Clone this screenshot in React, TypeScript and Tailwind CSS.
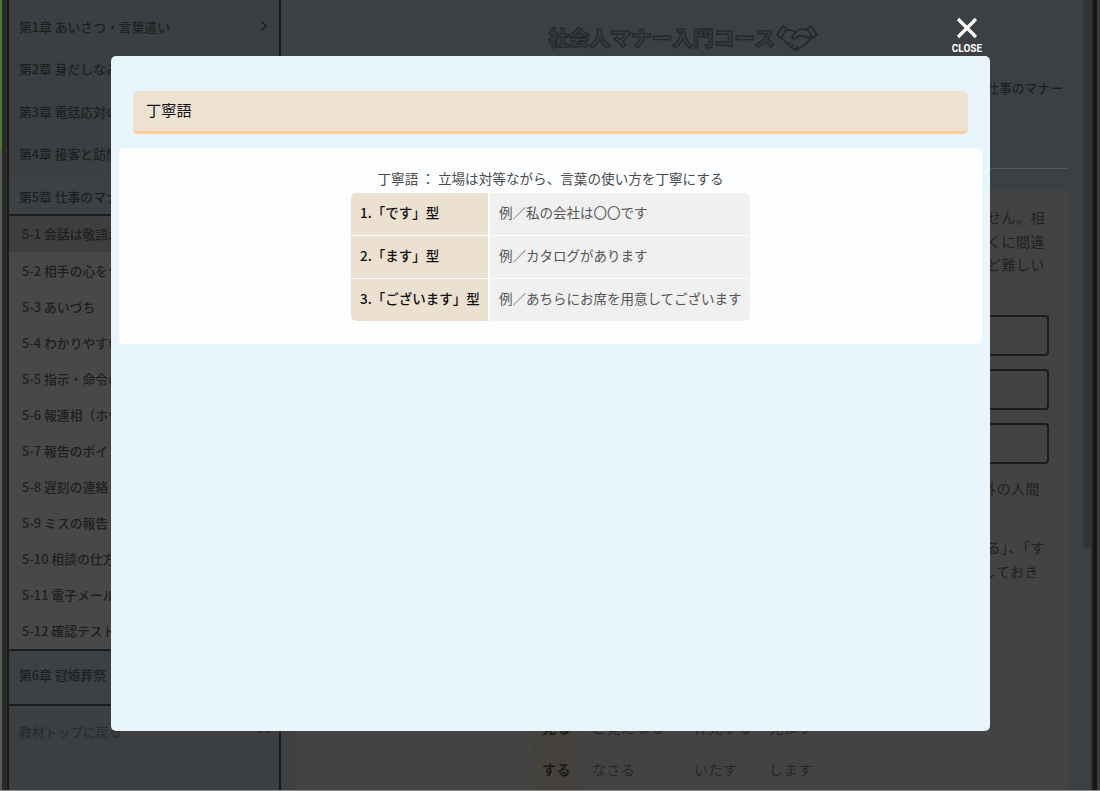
import React from 'react';
import { ChevronRight, ChevronUp } from 'lucide-react';

const chapters = ['第1章 あいさつ・言葉遣い', '第2章 身だしなみ', '第3章 電話応対の基本', '第4章 接客と訪問'];
const lessons = [
  '5-1 会話は敬語が基本',
  '5-2 相手の心をつかむ',
  '5-3 あいづち',
  '5-4 わかりやすい説明',
  '5-5 指示・命令の受け方',
  '5-6 報連相（ホウレンソウ）',
  '5-7 報告のポイント',
  '5-8 遅刻の連絡',
  '5-9 ミスの報告',
  '5-10 相談の仕方',
  '5-11 電子メールの基本',
  '5-12 確認テスト',
];
const rows = [
  ['1.「です」型', '例／私の会社は〇〇です'],
  ['2.「ます」型', '例／カタログがあります'],
  ['3.「ございます」型', '例／あちらにお席を用意してございます'],
];

const HandshakeLogo = () => (
  <svg width="42" height="27" viewBox="0 0 42 27" fill="none" stroke="#23292e" strokeWidth="1.8" strokeLinejoin="round" strokeLinecap="round">
    <path d="M1 11 L7 2 L11 4.5 L5 14 Z" />
    <path d="M41 11 L35 2 L31 4.5 L37 14 Z" />
    <path d="M10.5 6 L16 6.5 L20 8.5" />
    <path d="M31.5 6 L26 5 L21 7 L15.5 13 L18 15 L24 11.5 L35.5 14" />
    <path d="M6 14 L12 20.5 M12 20.5 L14.5 18.5 M12 20.5 L15 23 L17.5 20.5 M15 23 L18.5 25.5 L21 23 M18.5 25.5 L22 26 L24.5 23 L28.5 21 L35.5 14" />
  </svg>
);

const Sidebar = () => (
  <aside className="flex w-[274px] shrink-0 flex-col border-x-2 border-[#1c1c1c] bg-[#3c3f42] text-[12.8px] font-medium text-[#1d1f20]">
    <div className="h-[5px] shrink-0" />
    {chapters.map((c, i) => (
      <div key={c} className="flex h-[42.5px] shrink-0 items-center justify-between pl-[10px] pr-[7px]">
        <span>{c}</span>
        {i === 0 && <ChevronRight size={16} strokeWidth={2.5} />}
      </div>
    ))}
    <div className="mt-[3px] flex h-[36px] shrink-0 items-center bg-[#3b4145] pl-[10px] pt-[1px]">第5章 仕事のマナー</div>
    <ul className="shrink-0 border-y-2 border-[#1c1c1c] bg-[#484848]">
      {lessons.map((l, i) => (
        <li key={l} className={`flex h-[36.1px] items-center pl-[13px] ${i === 0 ? 'bg-[#3e3e3e]' : ''}`}>
          {l}
        </li>
      ))}
    </ul>
    <div className="flex h-[55px] shrink-0 items-center border-b-2 border-[#1c1c1c] bg-[#3b4145] pb-[6px] pl-[10px]">第6章 冠婚葬祭</div>
    <div className="flex h-[49px] shrink-0 items-center justify-between pl-[10px] pr-[7px] pt-[1px] text-[#2a2c2e]">
      <span>教材トップに戻る</span>
      <ChevronUp size={16} strokeWidth={2.5} />
    </div>
  </aside>
);

const Content = () => (
  <main className="flex min-w-0 flex-1 flex-col overflow-hidden bg-[#3c4043] text-[#1f2022]">
    <header className="flex h-[70px] shrink-0 items-center justify-center pl-[2px] pt-[4px]">
      <h1 className="text-[20.5px] font-black tracking-[0.2px] text-[#383d42] [-webkit-text-stroke:1.4px_#23292e]">
        社会人マナー入門コース
      </h1>
      <div className="ml-[1px]">
        <HandshakeLogo />
      </div>
    </header>
    <div className="flex h-[36px] shrink-0 items-center justify-end pr-[20px] text-[12.8px] font-medium">第5章 仕事のマナー</div>
    <hr className="mx-[15px] mt-[62px] shrink-0 border-[#55585a]" />
    <section className="mx-[14px] mt-[21px] flex-1 bg-[#434343] px-[20px] pt-[16px] text-[14px] leading-[23.5px] tracking-[0.5px]">
      <p className="pr-[4px] text-right">ません。相</p>
      <p className="pr-[4px] text-right">とくに間違</p>
      <p className="pr-[4px] text-right">ほど難しい</p>
      <div className="mt-[38.5px] flex flex-col gap-[13px]">
        <div className="h-[41px] rounded border-2 border-[#1c1c1c]" />
        <div className="h-[41px] rounded border-2 border-[#1c1c1c]" />
        <div className="h-[41px] rounded border-2 border-[#1c1c1c]" />
      </div>
      <p className="mt-[13px] pr-[9px] text-right">外の人間</p>
      <p className="mt-[35.5px] pr-[4px] text-right">いる」、「す</p>
      <p className="pr-[10px] text-right">しておき</p>
      <table className="ml-[218px] mt-[123.5px] w-[296px] table-fixed border-separate border-spacing-[1px] bg-[#3f3f3f] text-[14px] text-[#262626]">
        <tbody>
          {[
            ['見る', 'ご覧になる', '拝見する', '見ます'],
            ['する', 'なさる', 'いたす', 'します'],
          ].map(r => (
            <tr key={r[0]} className="h-[41px]">
              <th className="w-[45px] bg-[#45423d] font-bold text-[#1a1a1a]">{r[0]}</th>
              <td className="w-[102px] bg-[#434343] pl-[12px]">{r[1]}</td>
              <td className="w-[74px] bg-[#434343] pl-[11px]">{r[2]}</td>
              <td className="bg-[#434343] pl-[11px]">{r[3]}</td>
            </tr>
          ))}
        </tbody>
      </table>
    </section>
  </main>
);

const Modal = () => (
  <div className="absolute inset-0">
    <button className="absolute left-[948px] top-[17px] flex w-[38px] flex-col items-center text-white">
      <svg width="22" height="22" viewBox="0 0 22 22" fill="none" stroke="currentColor" strokeWidth="3.2">
        <path d="M2 2 L20 20 M20 2 L2 20" />
      </svg>
      <span className="mt-[4px] font-['Roboto',sans-serif] text-[10px] font-bold leading-[12px]">CLOSE</span>
    </button>
    <div className="absolute left-[111px] top-[56px] h-[675px] w-[879px] rounded-[5px] bg-[#e8f5fd] px-[8px] pt-[35px]">
      <h2 className="mx-[14px] flex h-[43px] items-center rounded-[5px] border-b-[3px] border-[#ffcc99] bg-[#ede1d0] pb-[4px] pl-[13px] text-[15.2px] font-normal text-[#111]">
        丁寧語
      </h2>
      <div className="mt-[14px] flex h-[196px] flex-col items-center rounded-[5px] bg-[#fbfdff] pt-[19px]">
        <p className="whitespace-nowrap text-[13.6px] leading-[22px] text-[#4a4a4a]">丁寧語 ： 立場は対等ながら、言葉の使い方を丁寧にする</p>
        <div className="mt-[4px] flex w-[399px] flex-col gap-[1.5px] overflow-hidden rounded-[5px]">
          {rows.map(([a, b]) => (
            <div key={a} className="flex h-[41.5px] gap-[2px] text-[13.5px]">
              <div className="flex w-[137px] shrink-0 items-center whitespace-nowrap bg-[#ece0d0] pb-[4px] pl-[9px] font-medium text-[#111]">{a}</div>
              <div className="flex flex-1 items-center whitespace-nowrap bg-[#f0f0f0] pb-[4px] pl-[9px] text-[#555]">{b}</div>
            </div>
          ))}
        </div>
      </div>
    </div>
  </div>
);

export default function App() {
  return (
    <div className="relative flex h-[791px] w-[1100px] flex-col overflow-hidden bg-[#2b2c2a] font-['Noto_Sans_CJK_JP','Noto_Sans',sans-serif]">
      <div className="flex h-[790px] shrink-0">
        <div className="flex w-[7px] shrink-0">
          <div className="flex w-[2px] flex-col">
            <div className="h-[150px] bg-[#4d7a33]" />
            <div className="flex-1 bg-[#5a5a5a]" />
          </div>
          <div className="flex-1 bg-[#2b2c2a]" />
        </div>
        <Sidebar />
        <Content />
        <div className="flex w-[17px] shrink-0">
          <div className="w-[8px] bg-[#3c4043]">
            <div className="h-[549px] rounded-b-[4px] bg-[#333436]" />
          </div>
          <div className="w-[2px] bg-[#2b2b2a]" />
          <div className="w-[4px] bg-[#141414]" />
          <div className="flex-1 bg-[#3a3d40]" />
        </div>
      </div>
      <div className="h-px bg-[#8a8a8a]" />
      <Modal />
    </div>
  );
}
